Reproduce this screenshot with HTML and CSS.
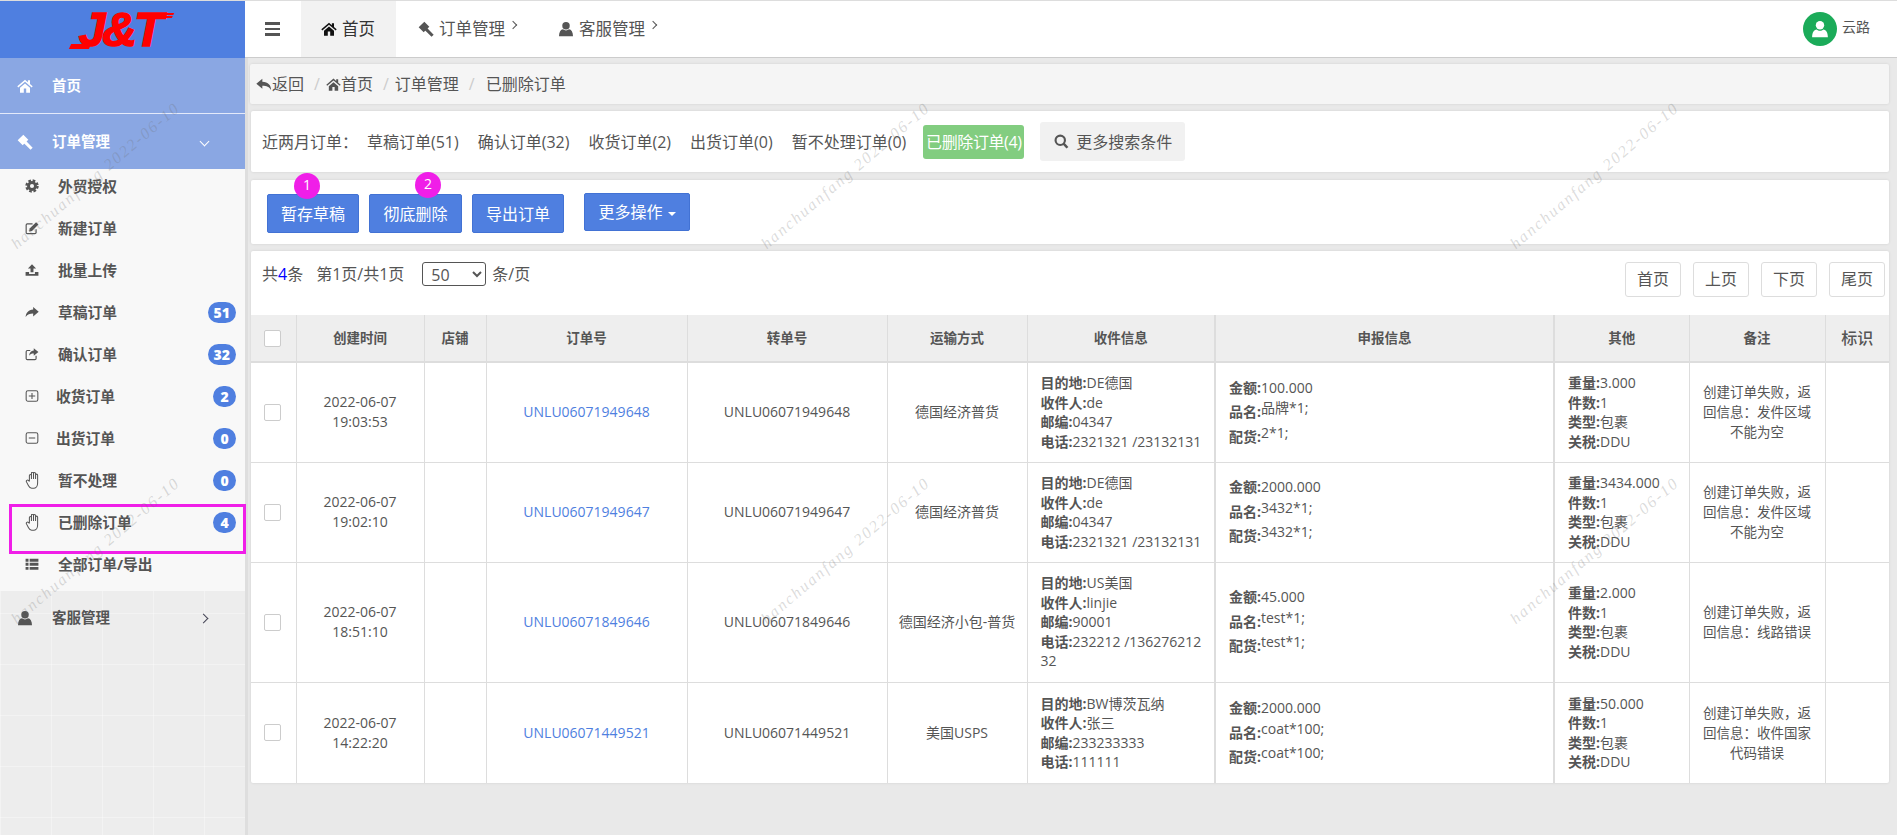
FILE: index.html
```html
<!DOCTYPE html>
<html lang="zh">
<head>
<meta charset="utf-8">
<title>已删除订单</title>
<link rel="stylesheet" href="styles.css">
</head>
<body>
<svg class="defs" width="0" height="0" aria-hidden="true">
  <symbol id="i-home" viewBox="0 0 24 24"><path d="M12 2.5 0.5 12.5l1.4 1.600L12 5.500l10.100 8.600 1.400-1.600L19.500 9V3.500h-3.200v2.800zM4.500 14.600V22h5.700v-6.200h3.600V22h5.700v-7.400L12 8.200z"/></symbol>
  <symbol id="i-gavel" viewBox="0 0 24 24"><path d="M9.500 1l7.500 7.500-8.500 8.500L1 9.500zM14 11l9.500 9.500-3.200 3.200L10.800 14.200z"/></symbol>
  <symbol id="i-user" viewBox="0 0 24 24"><circle cx="12" cy="7" r="5.600"/><path d="M1.500 23c0-6.500 2.500-10 6-10.500 1.200 1.100 2.800 1.700 4.500 1.700s3.300-.6 4.500-1.700c3.500.5 6 4 6 10.500z"/></symbol>
  <symbol id="i-cog" viewBox="0 0 24 24"><circle cx="12" cy="12" r="9.500" fill="none" stroke="currentColor" stroke-width="4" stroke-dasharray="4.500 2.960"/><circle cx="12" cy="12" r="6" fill="none" stroke="currentColor" stroke-width="5"/></symbol>
  <symbol id="i-edit" viewBox="0 0 24 24"><path d="M19 14v5.500a2 2 0 0 1-2 2H4a2 2 0 0 1-2-2V7a2 2 0 0 1 2-2h9" fill="none" stroke="currentColor" stroke-width="2"/><path d="M19 2l4 4L12 17l-5 1 1-5z"/></symbol>
  <symbol id="i-upload" viewBox="0 0 24 24"><path d="M12 2l7 7.500h-4.500V16h-5V9.500H5zM1 15.500h6V19h10v-3.500h6V22H1z"/></symbol>
  <symbol id="i-share" viewBox="0 0 24 24"><path d="M14 3.500l9.500 8-9.500 8v-4.800c-6 0-9.500 1.500-13 6 .5-7 4.500-12.500 13-13.200z"/></symbol>
  <symbol id="i-out" viewBox="0 0 24 24"><path d="M19 15v4.500a2 2 0 0 1-2 2H4a2 2 0 0 1-2-2V8a2 2 0 0 1 2-2h5" fill="none" stroke="currentColor" stroke-width="2"/><path d="M15 2l8 6.500-8 6.500v-4c-4 0-6 1-8 4 .3-5 3-9 8-9.200z"/></symbol>
  <symbol id="i-plus" viewBox="0 0 24 24"><rect x="2" y="3" width="20" height="18" rx="3" fill="none" stroke="currentColor" stroke-width="1.800"/><path d="M12 7v10M6.500 12h11" fill="none" stroke="currentColor" stroke-width="1.800"/></symbol>
  <symbol id="i-minus" viewBox="0 0 24 24"><rect x="2" y="3" width="20" height="18" rx="3" fill="none" stroke="currentColor" stroke-width="1.800"/><path d="M6.500 12h11" fill="none" stroke="currentColor" stroke-width="1.800"/></symbol>
  <symbol id="i-hand" viewBox="2.500 2 16 21.500"><path fill="none" stroke="currentColor" stroke-width="1.300" stroke-linejoin="round" d="M7.200 14V6.500a1.300 1.300 0 0 1 2.600 0V11M9.800 11V3.500a1.300 1.300 0 0 1 2.600 0V11M12.400 11V4a1.300 1.300 0 0 1 2.600 0v7M15 11V6a1.300 1.300 0 0 1 2.600 0v10c0 3-1.500 6.500-4.500 6.500h-3c-2 0-3-1-4-3L3.500 14.500c-.8-1.600 1.200-3 2.400-1.800L7.200 14"/></symbol>
  <symbol id="i-list" viewBox="0 0 24 24"><path d="M1 3h5v5H1zM8 3h15v5H8zM1 10h5v5H1zM8 10h15v5H8zM1 17h5v5H1zM8 17h15v5H8z"/></symbol>
  <symbol id="i-reply" viewBox="0 0 24 24"><path d="M9.500 4 0.500 11.500l9 7.500v-4.500c6.500 0 10.500 1.500 13 6.500 0-7.500-4-12-13-12.500z"/></symbol>
  <symbol id="i-search" viewBox="0 0 24 24"><circle cx="10" cy="10" r="7.500" fill="none" stroke="currentColor" stroke-width="3.400"/><path d="M15 15l6.500 7" fill="none" stroke="currentColor" stroke-width="4"/></symbol>
</svg>

<div class="app">
  <aside class="sidebar">
    <div class="logo"><span class="logo-text">J&amp;T</span></div>
    <a class="nav-top"><svg class="ic-top"><use href="#i-home"/></svg><span>首页</span></a>
    <a class="nav-top nav-open"><svg class="ic-top"><use href="#i-gavel"/></svg><span>订单管理</span><i class="chev chev-down"></i></a>
    <ul class="sub-list">
      <li class="sub-item"><svg class="ic-sub"><use href="#i-cog"/></svg><span>外贸授权</span></li>
      <li class="sub-item"><svg class="ic-sub"><use href="#i-edit"/></svg><span>新建订单</span></li>
      <li class="sub-item"><svg class="ic-sub"><use href="#i-upload"/></svg><span>批量上传</span></li>
      <li class="sub-item"><svg class="ic-sub"><use href="#i-share"/></svg><span>草稿订单</span><b class="count">51</b></li>
      <li class="sub-item"><svg class="ic-sub"><use href="#i-out"/></svg><span>确认订单</span><b class="count">32</b></li>
      <li class="sub-item tight"><svg class="ic-sub"><use href="#i-plus"/></svg><span>收货订单</span><b class="count">2</b></li>
      <li class="sub-item tight"><svg class="ic-sub"><use href="#i-minus"/></svg><span>出货订单</span><b class="count">0</b></li>
      <li class="sub-item"><svg class="ic-sub ic-hand"><use href="#i-hand"/></svg><span>暂不处理</span><b class="count">0</b></li>
      <li class="sub-item marked"><svg class="ic-sub ic-hand"><use href="#i-hand"/></svg><span>已删除订单</span><b class="count">4</b></li>
      <li class="sub-item"><svg class="ic-sub"><use href="#i-list"/></svg><span>全部订单/导出</span></li>
    </ul>
    <a class="nav-top nav-plain"><svg class="ic-top"><use href="#i-user"/></svg><span>客服管理</span><i class="chev chev-right"></i></a>
  </aside>

  <div class="content">
    <header class="topbar">
      <span class="burger"><i></i><i></i><i></i></span>
      <a class="tab tab-active"><svg class="ic-tab"><use href="#i-home"/></svg>首页</a>
      <a class="tab"><svg class="ic-tab"><use href="#i-gavel"/></svg>订单管理<i class="chev chev-sup"></i></a>
      <a class="tab"><svg class="ic-tab"><use href="#i-user"/></svg>客服管理<i class="chev chev-sup"></i></a>
      <div class="account">
        <span class="avatar"><svg class="ic-avatar"><use href="#i-user"/></svg></span>
        <span>云路</span>
      </div>
    </header>

    <main class="main">
      <nav class="panel crumbs">
        <a class="crumb"><svg class="ic-crumb"><use href="#i-reply"/></svg>返回</a>
        <span class="sep">/</span>
        <a class="crumb"><svg class="ic-crumb-home"><use href="#i-home"/></svg>首页</a>
        <span class="sep">/</span>
        <a class="crumb">订单管理</a>
        <span class="sep sep-wide">/</span>
        <a class="crumb">已删除订单</a>
      </nav>

      <section class="panel filters">
        <span class="filter-label">近两月订单：</span>
        <a class="filter">草稿订单(51)</a>
        <a class="filter">确认订单(32)</a>
        <a class="filter">收货订单(2)</a>
        <a class="filter">出货订单(0)</a>
        <a class="filter">暂不处理订单(0)</a>
        <a class="filter filter-on">已删除订单(4)</a>
        <button class="btn-more"><svg class="ic-search"><use href="#i-search"/></svg>更多搜索条件</button>
      </section>

      <section class="panel actions">
        <button class="btn">暂存草稿<span class="pin pin-one">1</span></button>
        <button class="btn btn-wide">彻底删除<span class="pin pin-two">2</span></button>
        <button class="btn">导出订单</button>
        <button class="btn btn-drop">更多操作<i class="caret"></i></button>
      </section>

      <section class="panel orders">
        <div class="pager-row">
          <span class="total">共<em>4</em>条</span>
          <span class="page-of">第1页/共1页</span>
          <select class="size"><option>50</option></select>
          <span class="per">条/页</span>
          <div class="pager">
            <a class="page">首页</a><a class="page">上页</a><a class="page">下页</a><a class="page">尾页</a>
          </div>
        </div>
        <table class="grid">
          <colgroup>
            <col class="c1"><col class="c2"><col class="c3"><col class="c4"><col class="c5"><col class="c6"><col class="c7"><col class="c8"><col class="c9"><col class="c10"><col class="c11">
          </colgroup>
          <thead>
            <tr>
              <th class="chk"><span class="box"></span></th><th>创建时间</th><th>店铺</th><th>订单号</th><th>转单号</th><th>运输方式</th><th>收件信息</th><th class="thick">申报信息</th><th class="thick">其他</th><th>备注</th><th class="mark">标识</th>
            </tr>
          </thead>
          <tbody>
            <tr class="r100">
              <td class="chk"><span class="box"></span></td>
              <td>2022-06-07<br>19:03:53</td><td></td>
              <td><a class="link">UNLU06071949648</a></td><td>UNLU06071949648</td><td>德国经济普货</td>
              <td class="info"><b>目的地:</b>DE德国<br><b>收件人:</b>de<br><b>邮编:</b>04347<br><b>电话:</b>2321321 /23132131</td>
              <td class="thick decl"><b>金额:</b>100.000<br><b>品名:</b><span class="up">品牌*1;</span><br><b>配货:</b><span class="up">2*1;</span></td>
              <td class="thick info"><b>重量:</b>3.000<br><b>件数:</b>1<br><b>类型:</b>包裹<br><b>关税:</b>DDU</td>
              <td class="note">创建订单失败，返回信息：发件区域不能为空</td><td></td>
            </tr>
            <tr class="r100">
              <td class="chk"><span class="box"></span></td>
              <td>2022-06-07<br>19:02:10</td><td></td>
              <td><a class="link">UNLU06071949647</a></td><td>UNLU06071949647</td><td>德国经济普货</td>
              <td class="info"><b>目的地:</b>DE德国<br><b>收件人:</b>de<br><b>邮编:</b>04347<br><b>电话:</b>2321321 /23132131</td>
              <td class="thick decl"><b>金额:</b>2000.000<br><b>品名:</b><span class="up">3432*1;</span><br><b>配货:</b><span class="up">3432*1;</span></td>
              <td class="thick info"><b>重量:</b>3434.000<br><b>件数:</b>1<br><b>类型:</b>包裹<br><b>关税:</b>DDU</td>
              <td class="note">创建订单失败，返回信息：发件区域不能为空</td><td></td>
            </tr>
            <tr class="r120">
              <td class="chk"><span class="box"></span></td>
              <td>2022-06-07<br>18:51:10</td><td></td>
              <td><a class="link">UNLU06071849646</a></td><td>UNLU06071849646</td><td class="tight-cell">德国经济小包-普货</td>
              <td class="info"><b>目的地:</b>US美国<br><b>收件人:</b>linjie<br><b>邮编:</b>90001<br><b>电话:</b>232212 /136276212<br>32</td>
              <td class="thick decl"><b>金额:</b>45.000<br><b>品名:</b><span class="up">test*1;</span><br><b>配货:</b><span class="up">test*1;</span></td>
              <td class="thick info"><b>重量:</b>2.000<br><b>件数:</b>1<br><b>类型:</b>包裹<br><b>关税:</b>DDU</td>
              <td class="note">创建订单失败，返回信息：线路错误</td><td></td>
            </tr>
            <tr class="r101">
              <td class="chk"><span class="box"></span></td>
              <td>2022-06-07<br>14:22:20</td><td></td>
              <td><a class="link">UNLU06071449521</a></td><td>UNLU06071449521</td><td>美国USPS</td>
              <td class="info"><b>目的地:</b>BW博茨瓦纳<br><b>收件人:</b>张三<br><b>邮编:</b>233233333<br><b>电话:</b>111111</td>
              <td class="thick decl"><b>金额:</b>2000.000<br><b>品名:</b><span class="up">coat*100;</span><br><b>配货:</b><span class="up">coat*100;</span></td>
              <td class="thick info"><b>重量:</b>50.000<br><b>件数:</b>1<br><b>类型:</b>包裹<br><b>关税:</b>DDU</td>
              <td class="note">创建订单失败，返回信息：收件国家代码错误</td><td></td>
            </tr>
          </tbody>
        </table>
      </section>
    </main>
  </div>
</div>

<div class="watermarks" aria-hidden="true">
  <span class="wm">hanchuanfang 2022-06-10</span><span class="wm">hanchuanfang 2022-06-10</span><span class="wm">hanchuanfang 2022-06-10</span>
  <span class="wm">hanchuanfang 2022-06-10</span><span class="wm">hanchuanfang 2022-06-10</span><span class="wm">hanchuanfang 2022-06-10</span>
</div>
</body>
</html>
```

FILE: styles.css
```css
* { box-sizing: border-box; }
html, body { height: 100%; overflow: hidden; }
body {
  margin: 0;
  border-top: 1px solid #ddd;
  background: #e9e9e9;
  color: #555;
  font: 14px/20px "Open Sans", "Noto Sans CJK SC", sans-serif;
}
a { color: inherit; text-decoration: none; }
ul { list-style: none; margin: 0; padding: 0; }
svg { fill: currentColor; flex: none; }
.defs { position: absolute; }

.app { display: flex; height: 834px; }

/* sidebar */
.sidebar {
  width: 248px;
  flex: none;
  border-right: 3px solid #dedede;
  background-color: #ededed;
  background-image:
    linear-gradient(rgba(255,255,255,.35) 1px, transparent 1px),
    linear-gradient(90deg, rgba(255,255,255,.35) 1px, transparent 1px);
  background-size: 51px 51px;
}
.logo {
  height: 57px;
  background: #4f7fe0;
  display: flex;
  justify-content: center;
  align-items: center;
  padding: 0 6px 0 0;
}
.logo-text {
  position: relative;
  color: #f00;
  font: italic 700 48px/48px "Liberation Sans", sans-serif;
  letter-spacing: -3px;
  -webkit-text-stroke: 1.500px #f00;
}
.logo-text::before {
  content: "";
  position: absolute;
  left: -9px;
  bottom: 5px;
  width: 20px;
  height: 5px;
  background: #f00;
  transform: skewX(-25deg);
}
.logo-text::after {
  content: "";
  position: absolute;
  right: -13px;
  top: 7px;
  width: 17px;
  height: 5px;
  background: linear-gradient(#f00 40%, transparent 40%, transparent 60%, #f00 60%);
  transform: skewX(-25deg);
}
.nav-top {
  display: flex;
  align-items: center;
  height: 56px;
  padding: 0 0 0 17px;
  background: #8aa7e3;
  color: #fff;
  font-weight: 700;
  font-size: 14.500px;
  border-bottom: 1px solid #e4eafa;
}
.nav-top span { margin-left: 19px; }
.nav-open { height: 55px; border-bottom: 0; }
.nav-plain {
  background: transparent;
  color: #555;
  height: 54px;
  border-bottom: 0;
}
.ic-top { width: 16px; height: 16px; }
.chev {
  display: inline-block;
  width: 7px;
  height: 7px;
  border-top: 1.500px solid currentColor;
  border-right: 1.500px solid currentColor;
}
.chev-down { margin-left: 91px; transform: rotate(135deg); }
.chev-right { margin-left: 90px; transform: rotate(45deg); color: #445; }
.sub-list { background: #f8f8f8; padding-bottom: 2px; }
.sub-item {
  position: relative;
  display: flex;
  align-items: flex-start;
  gap: 19px;
  height: 42px;
  padding: 6.500px 9px 0 25px;
  font-weight: 700;
  font-size: 14.750px;
}
.sub-item.tight { gap: 17px; }
.ic-sub { width: 14px; height: 14px; margin-top: 3px; }
.ic-hand { height: 17px; margin-top: 2px; }
.count {
  margin-left: auto;
  min-width: 23px;
  height: 21px;
  padding: 0 6px;
  border-radius: 11px;
  background: #4f7fe0;
  color: #fff;
  text-align: center;
  line-height: 21px;
  font-size: 14px;
}
.marked::after {
  content: "";
  position: absolute;
  left: 9px;
  right: -1px;
  top: -1px;
  height: 44px;
  border: 3px solid #f01ee8;
}

/* top bar */
.content { flex: 1; min-width: 0; display: flex; flex-direction: column; }
.topbar {
  display: flex;
  align-items: stretch;
  height: 57px;
  background: #fff;
  border-bottom: 1px solid #ccc;
  color: #555;
  font-size: 16.500px;
  margin-left: -3px;
  flex: none;
}
.burger {
  display: flex;
  flex-direction: column;
  justify-content: center;
  gap: 3px;
  width: 15px;
  margin: 0 21px 0 20px;
}
.burger i { display: block; height: 2.500px; background: #555; }
.tab { display: flex; align-items: center; gap: 5px; padding: 0 22px 0 0; margin-left: 20px; }
.tab-active {
  background: #f2f2f2;
  color: #333;
  margin-left: 0;
  padding: 0 20px;
  width: 95px;
  margin-right: 2px;
}
.ic-tab { width: 16px; height: 16px; }
.tab-active .ic-tab { color: #111; }
.chev-sup {
  width: 6px;
  height: 6px;
  border-width: 1px;
  margin: -8px 0 0 0;
  transform: rotate(45deg);
}
.account {
  margin-left: auto;
  padding-right: 27px;
  display: flex;
  align-items: center;
  gap: 5px;
  font-size: 14px;
  padding-bottom: 4px;
}
.avatar {
  width: 34px;
  height: 34px;
  border-radius: 50%;
  background: #1bab59;
  color: #fff;
  display: flex;
  align-items: center;
  justify-content: center;
  margin-top: 4px;
}
.ic-avatar { width: 18px; height: 20px; }

/* main */
.main {
  display: flex;
  flex-direction: column;
  gap: 7px;
  padding: 6px 8px 0 3px;
}
.panel { background: #fff; box-shadow: 0 0 3px rgba(0,0,0,.1); border-radius: 2px; }
.crumbs {
  display: flex;
  align-items: center;
  height: 40px;
  margin-left: -1px;
  padding-left: 6px;
  background: #f5f5f5;
  font-size: 16px;
}
.ic-crumb { width: 16px; height: 16px; }
.ic-crumb-home { width: 15px; height: 15px; }
.crumb { display: flex; align-items: center; }
.sep { color: #ccc; margin: 0 6px 0 10px; }
.sep-wide { margin: 0 11px 0 10px; }

.filters {
  display: flex;
  align-items: center;
  height: 61px;
  padding-left: 11px;
  font-size: 16px;
}
.filter-label { width: 105px; }
.filter { margin-right: 19px; white-space: nowrap; }
.filter-on {
  margin-left: -2px;
  margin-right: 16px;
  width: 101px;
  height: 34px;
  line-height: 34px;
  text-align: center;
  background: #82cd80;
  color: #fff;
  border-radius: 3px;
  letter-spacing: -.4px;
}
.btn-more {
  display: flex;
  align-items: center;
  gap: 7px;
  width: 145px;
  height: 39px;
  padding: 0 0 0 14px;
  background: #f1f1f1;
  border: 0;
  border-radius: 3px;
  color: #555;
  font: inherit;
  font-size: 16px;
}
.ic-search { width: 15px; height: 15px; }

.actions {
  display: flex;
  align-items: flex-start;
  height: 64px;
  margin-top: 1px;
  padding: 14px 0 0 16px;
  gap: 10px;
}
.btn {
  position: relative;
  width: 92px;
  height: 39px;
  background: #4f7fe0;
  border: 1px solid #4272d4;
  border-radius: 2px;
  color: #fff;
  font: inherit;
  font-size: 16px;
}
.btn-wide { width: 93px; }
.btn-drop { width: 106px; height: 38px; margin: -1px 0 0 10px; }
.caret {
  display: inline-block;
  margin-left: 5px;
  border: 4px solid transparent;
  border-top-color: #fff;
  border-bottom: 0;
  vertical-align: middle;
}
.pin {
  position: absolute;
  width: 26px;
  height: 26px;
  border-radius: 50%;
  background: #f01ee8;
  color: #fff;
  text-align: center;
  font-size: 14px;
  line-height: 24px;
}
.pin-one { left: 26px; top: -22px; }
.pin-two { left: 45px; top: -23px; }

.pager-row {
  display: flex;
  align-items: flex-start;
  height: 64px;
  padding: 11px 4px 0 11px;
  font-size: 16px;
}
.total em { font-style: normal; color: #00f; }
.total { margin-right: 13px; line-height: 24px; }
.page-of { margin-right: 18px; line-height: 24px; }
.size {
  width: 64px;
  height: 24px;
  border: 1px solid #555;
  border-radius: 3px;
  background: #fff;
  color: #555;
  font: inherit;
  padding-left: 4px;
  margin-right: 6px;
}
.per { line-height: 24px; }
.pager { margin-left: auto; display: flex; gap: 12px; }
.page {
  width: 56px;
  height: 35px;
  line-height: 33px;
  text-align: center;
  background: #fff;
  border: 1px solid #ddd;
  border-radius: 3px;
}

/* table */
.grid {
  width: 100%;
  table-layout: fixed;
  border-collapse: collapse;
  text-align: center;
}
.c1 { width: 45px; } .c2 { width: 128px; } .c3 { width: 62px; } .c4 { width: 201px; }
.c5 { width: 200px; } .c6 { width: 140px; } .c7 { width: 188px; } .c8 { width: 339px; }
.c9 { width: 135px; } .c10 { width: 136px; } .c11 { width: 64px; }
.grid th, .grid td { border: 1px solid #ddd; padding: 0 13px; }
.grid tr > :first-child { border-left: 0; }
.grid tr > :last-child { border-right: 0; }
.grid tr:last-child td { border-bottom: 0; }
.grid th {
  height: 47px;
  background: #eee;
  border-top: 0;
  border-bottom: 2px solid #ddd;
  font-size: 13.500px;
  font-weight: 700;
}
.grid .mark { font-size: 16px; font-weight: 500; padding: 0; }
.grid .thick { border-left-width: 2px; }
.grid .chk { padding: 0 0 0 13px; text-align: left; }
.grid .tight-cell { padding: 0 4px; }
.box {
  display: block;
  width: 17px;
  height: 17px;
  background: #fff;
  border: 1px solid #ccc;
  border-radius: 2px;
}
.r100 { height: 100px; }
.r120 { height: 120px; }
.r101 { height: 101px; }
.link { color: #4f7fe0; }
.info { text-align: left; line-height: 19.500px; white-space: nowrap; }
.decl { text-align: left; line-height: 24.500px; }
.up { vertical-align: 4px; line-height: 1; }
.note { font-size: 13.500px; }

/* watermark */
.watermarks {
  position: absolute;
  left: -9px;
  top: 175px;
  display: grid;
  grid-template-columns: 749.500px 749.500px 300px;
  grid-template-rows: 375px 20px;
  pointer-events: none;
}
.wm {
  width: 188px;
  height: 20px;
  text-align: center;
  white-space: nowrap;
  color: rgba(110,110,110,.25);
  font: italic 16px/20px "Liberation Serif", serif;
  letter-spacing: 2px;
  transform: rotate(-40.500deg);
}
```
